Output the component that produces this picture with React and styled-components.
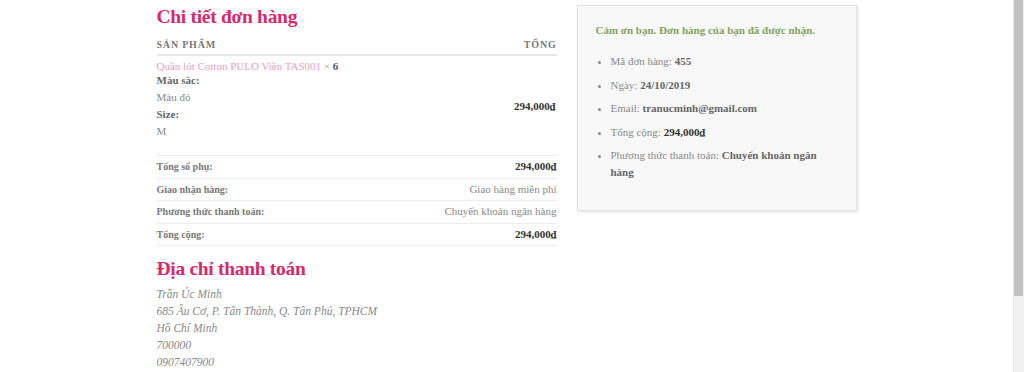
import React from 'react'
import styled, { createGlobalStyle } from 'styled-components'

const GlobalStyle = createGlobalStyle`
  html, body {
    margin: 0;
    padding: 0;
    background: #fff;
    overflow: hidden;
  }
  body {
    font-family: "Liberation Serif", "Times New Roman", serif;
    color: #777;
  }
`

const Window = styled.div`
  display: flex;
  height: 100vh;
  overflow: hidden;
`

const Viewport = styled.div`
  flex: 1;
  min-width: 0;
`

const ScrollTrack = styled.div`
  width: 11px;
  flex: none;
  background: #f1f1f1;
  border-left: 1px solid #ececec;
  box-sizing: border-box;
`

const ScrollThumb = styled.div`
  height: 296px;
  margin-right: 1px;
  background: #c1c1c1;
`

const Page = styled.div`
  padding-top: 5px;
`

const Grid = styled.div`
  width: 700px;
  margin: 0 auto;
  display: grid;
  grid-template-columns: 400px 280px;
  column-gap: 20px;
  align-items: start;
`

const Main = styled.div``

const Heading = styled.h2`
  margin: ${p => (p.second ? '11px 0 0' : '0')};
  font-size: 19.5px;
  letter-spacing: -0.3px;
  line-height: 24px;
  font-weight: 700;
  color: #d6286b;
`

const Table = styled.table`
  width: 100%;
  border-collapse: collapse;
  font-size: 11px;
`

const Th = styled.th`
  text-align: ${p => (p.right ? 'right' : 'left')};
  padding: 8px 0 1px;
  line-height: 16px;
  font-size: 10px;
  font-weight: 700;
  letter-spacing: 0.8px;
  text-transform: uppercase;
  color: #777;
  border-bottom: 2px solid #e8e8e8;
`

const ItemCell = styled.td`
  padding: 4px 0 15px;
  vertical-align: top;
  border-bottom: 1px solid #ececec;
`

const PriceCell = styled.td`
  text-align: right;
  vertical-align: middle;
  font-weight: 700;
  color: #333;
  border-bottom: 1px solid #ececec;
  padding-top: 2px;
`

const ProductLine = styled.div`
  line-height: 12px;
  color: #aaa;
`

const ProductLink = styled.a`
  color: #ea9ec0;
  text-decoration: none;
`

const Qty = styled.strong`
  color: #555;
`

const Meta = styled.dl`
  margin: 0;
  line-height: 17px;
`

const MetaLabel = styled.dt`
  font-weight: 700;
  color: #666;
`

const MetaValue = styled.dd`
  margin: 0;
  color: #888;
`

const FootRow = styled.tr`
  border-bottom: 1px solid #ececec;
`

const FootLabel = styled.th`
  text-align: left;
  font-weight: 700;
  font-size: 10px;
  color: #777;
  padding: 4px 0;
  line-height: 13.5px;
`

const FootValue = styled.td`
  text-align: right;
  padding: 4px 0;
  line-height: 13.5px;
  font-weight: ${p => (p.bold ? 700 : 400)};
  color: ${p => (p.bold ? '#333' : '#888')};
`

const Address = styled.address`
  margin-top: 5px;
  font-size: 11.5px;
  line-height: 17px;
  font-style: italic;
  color: #888;
`

const Card = styled.div`
  background: #f8f8f8;
  border: 1px solid #e4e4e4;
  box-shadow: 1px 1px 3px rgba(0, 0, 0, 0.12);
  padding: 16px 18px 29px;
`

const Notice = styled.p`
  margin: 0;
  font-size: 11px;
  line-height: 17px;
  font-weight: 700;
  color: #82a25e;
`

const Details = styled.ul`
  margin: 14px 0 0;
  padding-left: 15px;
  font-size: 11px;
  line-height: 17px;
  color: #888;
`

const DetailItem = styled.li`
  margin-bottom: 6.5px;
  &:last-child {
    margin-bottom: 0;
  }
  strong {
    color: #666;
  }
`

const Dark = styled.strong`
  && {
    color: #333;
  }
`

const footRows = [
  { label: 'Tổng số phụ:', value: '294,000₫', bold: true },
  { label: 'Giao nhận hàng:', value: 'Giao hàng miễn phí' },
  { label: 'Phương thức thanh toán:', value: 'Chuyển khoản ngân hàng' },
  { label: 'Tổng cộng:', value: '294,000₫', bold: true },
]

const addressLines = [
  'Trần Úc Minh',
  '685 Âu Cơ, P. Tân Thành, Q. Tân Phú, TPHCM',
  'Hồ Chí Minh',
  '700000',
  '0907407900',
]

export default function App() {
  return (
    <Window>
      <GlobalStyle />
      <Viewport>
        <Page>
          <Grid>
            <Main>
              <Heading>Chi tiết đơn hàng</Heading>
              <Table>
                <thead>
                  <tr>
                    <Th>Sản phẩm</Th>
                    <Th right>Tổng</Th>
                  </tr>
                </thead>
                <tbody>
                  <tr>
                    <ItemCell>
                      <ProductLine>
                        <ProductLink href="#">Quần lót Cotton PULO Viền TAS001</ProductLink> × <Qty>6</Qty>
                      </ProductLine>
                      <Meta>
                        <MetaLabel>Màu sắc:</MetaLabel>
                        <MetaValue>Màu đỏ</MetaValue>
                        <MetaLabel>Size:</MetaLabel>
                        <MetaValue>M</MetaValue>
                      </Meta>
                    </ItemCell>
                    <PriceCell>294,000₫</PriceCell>
                  </tr>
                </tbody>
                <tfoot>
                  {footRows.map(row => (
                    <FootRow key={row.label}>
                      <FootLabel>{row.label}</FootLabel>
                      <FootValue bold={row.bold}>{row.value}</FootValue>
                    </FootRow>
                  ))}
                </tfoot>
              </Table>

              <Heading second>Địa chỉ thanh toán</Heading>
              <Address>
                {addressLines.map(line => (
                  <div key={line}>{line}</div>
                ))}
              </Address>
            </Main>

            <Card>
              <Notice>Cảm ơn bạn. Đơn hàng của bạn đã được nhận.</Notice>
              <Details>
                <DetailItem>Mã đơn hàng: <strong>455</strong></DetailItem>
                <DetailItem>Ngày: <strong>24/10/2019</strong></DetailItem>
                <DetailItem>Email: <strong>tranucminh@gmail.com</strong></DetailItem>
                <DetailItem>Tổng cộng: <Dark>294,000₫</Dark></DetailItem>
                <DetailItem>Phương thức thanh toán: <strong>Chuyển khoản ngân hàng</strong></DetailItem>
              </Details>
            </Card>
          </Grid>
        </Page>
      </Viewport>
      <ScrollTrack>
        <ScrollThumb />
      </ScrollTrack>
    </Window>
  )
}
